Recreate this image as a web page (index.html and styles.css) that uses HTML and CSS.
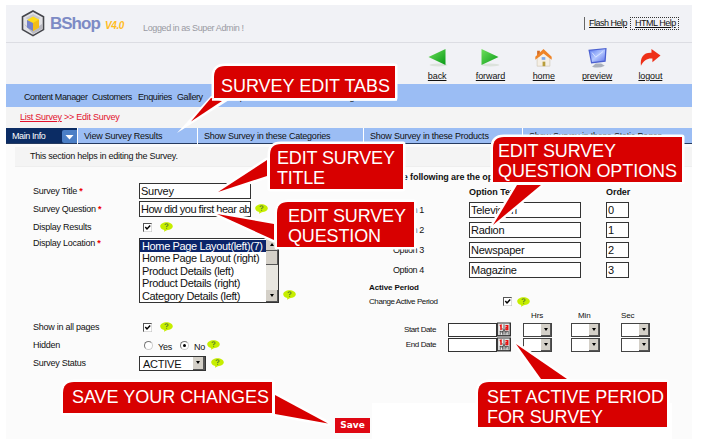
FILE: index.html
```html
<!DOCTYPE html>
<html lang="en">
<head>
<meta charset="utf-8">
<title>BShop - Edit Survey</title>
<link rel="stylesheet" href="styles.css">
</head>
<body>
<svg width="0" height="0" class="defs">
  <defs>
    <linearGradient id="green" x1="0" y1="0" x2="1" y2="1"><stop offset="0" stop-color="#6fe05c"/><stop offset="1" stop-color="#089a17"/></linearGradient>
    <linearGradient id="screen" x1="0" y1="0" x2="1" y2="1"><stop offset="0" stop-color="#5f7df0"/><stop offset=".5" stop-color="#b4c8ff"/><stop offset="1" stop-color="#6478ea"/></linearGradient>
    <symbol id="help" viewBox="0 0 13 10"><path d="M6.5 0.3C10 .3 12.8 2 12.8 4.3S10 8.2 6.8 8.2L4 9.8 4.3 8C2 7.500.2 6.200.2 4.300.2 2 3 .3 6.500.3Z" fill="#c6ee00"/><path d="M5 3Q5.200 1.700 6.600 1.700T8.100 3Q8.100 3.800 6.600 4.600V5.200M6.600 6.200V7.100" fill="none" stroke="#62872a" stroke-width="1.100"/></symbol>
    <symbol id="check" viewBox="0 0 9 9"><path d="M0 0H9V9H0Z" fill="#fff"/><path d="M0 9V0H9" fill="none" stroke="#555" stroke-width="2"/><path d="M9 0V9H0" fill="none" stroke="#bbb"/><path d="M2.300 4 4 5.900 7.200 2.600" fill="none" stroke="#000" stroke-width="1.500"/></symbol>
    <symbol id="cal" viewBox="0 0 15 15"><path d="M0 0H15V15H0Z" fill="#333"/><path d="M1 1H13.500V13.500H1Z" fill="#d5d5d5"/><path d="M2 2H13V13H2Z" fill="#eee"/><path d="M7.500 2V13M3 9.500H6M9 9.500H12M3.500 9V13M6 9V13M9.500 9V13M12 9V13M5 6 10 11M10 6 5 11" fill="none" stroke="#444" stroke-width=".9"/><path d="M3 3.500 4.300 3V8M9 3.500H11.500V7.500H9M9 5.500H11" fill="none" stroke="#e81010" stroke-width="1.600"/></symbol>
  </defs>
</svg>
<div class="app">
  <header class="header">
    <svg class="logo" viewBox="0 0 24 27"><path d="M12 1 22.500 6.800V19.600L12 25.600 1.500 19.600V6.800Z" fill="#e2e2e6" stroke="#45464c" stroke-width="1.600"/><path d="M12 4 19.500 8 12 12 4.500 8Z" fill="#c9c9cf"/><path d="M3 14 12 24 21 19V14L12 20Z" fill="#b9b9c2"/><path d="M6 10 12 6.500 18 9.500V17.500L12 21Z" fill="#ffdc18"/><path d="M6 10 12 13V21L6 17.500Z" fill="#7482c9"/><path d="M12 13 18 9.500V17.500L12 21Z" fill="#f2bd17"/></svg>
    <span class="brand">BShop</span><span class="version">V4.0</span>
    <span class="login">Logged in as Super Admin !</span>
    <nav class="helps"><a class="flash">Flash Help</a><a class="html">HTML Help</a></nav>
  </header>
  <div class="toolbar">
    <a class="tool"><svg viewBox="0 0 20 20"><ellipse cx="11" cy="17" rx="9" ry="1.500" fill="#dce2dc"/><path d="M1 9 18 1V17Z" fill="url(#green)"/></svg><span>back</span></a>
    <a class="tool"><svg viewBox="0 0 20 20"><ellipse cx="10" cy="17" rx="9" ry="1.500" fill="#dce2dc"/><path d="M18 9 1 1V17Z" fill="url(#green)"/></svg><span>forward</span></a>
    <a class="tool"><svg viewBox="0 0 20 22"><path d="M3 11 10 5 17 11V20H3Z" fill="#f5efe5" stroke="#c9bda9" stroke-width=".6"/><path d="M3 3H6V9H3Z" fill="#d46a22"/><path d="M1 13V9.500L10 1 19 9.500V13L10 6Z" fill="#ef8427"/><path d="M8 10H12V13H8Z" fill="#7da9ec"/><path d="M9 15H12V20H9Z" fill="#b89d3b"/></svg><span>home</span></a>
    <a class="tool"><svg viewBox="0 0 22 22"><path d="M1 2 21 0 20 15 4 17Z" fill="#4b60d0"/><path d="M2.500 3 19.500 1.500 18.700 13.800 5 15.500Z" fill="url(#screen)"/><path d="M5 5 9 10 17 4" stroke="#dce6ff" fill="none"/><path d="M9 17H15L19 19.500Q12 23 5 20.500Z" fill="#aab0bc"/></svg><span>preview</span></a>
    <a class="tool"><svg viewBox="0 0 22 20"><path d="M1 18C0 9 4 4 12 4.500V0.500L21.500 7.500 13 14.500V10.500C8 10 4 12 1 18Z" fill="#ee3018"/></svg><span>logout</span></a>
  </div>
  <nav class="menu"><a class="m1">Content Manager</a><a class="m2">Customers</a><a class="m3">Enquiries</a><a class="m4">Gallery</a><a class="m5">Reports</a><a class="m6">Settings</a></nav>
  <div class="crumbs"><u>List Survey</u> &gt;&gt; Edit Survey</div>
  <div class="tabs">
    <div class="tab active"><span>Main Info</span><svg viewBox="0 0 15 13"><path d="M0 2Q0 0 2 0H15V13H2Q0 13 0 11Z" fill="#4b7fc6"/><path d="M3.500 5H11.500L7.500 9.500Z" fill="#fff"/></svg></div>
    <div class="tab"><span>View Survey Results</span></div>
    <div class="tab"><span>Show Survey in these Categories</span></div>
    <div class="tab"><span>Show Survey in these Products</span></div>
    <div class="tab"><span>Show Survey in these Static Pages</span></div>
  </div>
  <div class="intro"><span>This section helps in editing the Survey.</span></div>
  <main class="content">
    <section class="left">
      <div class="row"><label>Survey Title <b>*</b></label><div class="field wide"><span>Survey</span></div></div>
      <div class="row"><label>Survey Question <b>*</b></label><div class="field wide"><span class="question">How did you first hear ab</span></div><svg class="help up"><use href="#help"/></svg></div>
      <div class="row"><label>Display Results</label><svg class="check"><use href="#check"/></svg><svg class="help"><use href="#help"/></svg></div>
      <div class="row list-row"><label>Display Location <b>*</b></label>
        <div class="list"><div class="options"><p class="sel">Home Page Layout(left)(7)</p><p>Home Page Layout (right)</p><p>Product Details (left)</p><p>Product Details (right)</p><p>Category Details (left)</p></div><div class="scroll"><i class="arrow upward"></i><i class="thumb"></i><i class="arrow down"></i></div></div>
        <svg class="help"><use href="#help"/></svg></div>
      <div class="row"><label>Show in all pages</label><svg class="check"><use href="#check"/></svg><svg class="help"><use href="#help"/></svg></div>
      <div class="row"><label>Hidden</label><i class="radio"></i><span class="yes">Yes</span><i class="radio on"></i><span class="no">No</span><svg class="help near"><use href="#help"/></svg></div>
      <div class="row"><label>Survey Status</label><div class="status"><span>ACTIVE</span><i class="drop"></i></div><svg class="help st"><use href="#help"/></svg></div>
    </section>
    <section class="right">
      <h3 class="lead">The following are the options of the survey</h3>
      <div class="heads"><b>Option Text</b><b>Order</b></div>
      <div class="opt"><label>Option 1</label><div class="field wide"><span>Television</span></div><div class="field ord">0</div></div>
      <div class="opt"><label>Option 2</label><div class="field wide"><span>Radion</span></div><div class="field ord">1</div></div>
      <div class="opt"><label>Option 3</label><div class="field wide"><span>Newspaper</span></div><div class="field ord">2</div></div>
      <div class="opt"><label>Option 4</label><div class="field wide"><span>Magazine</span></div><div class="field ord">3</div></div>
      <h3 class="period">Active Period</h3>
      <div class="change"><span>Change Active Period</span><svg class="check"><use href="#check"/></svg><svg class="help"><use href="#help"/></svg></div>
      <div class="units"><span>Hrs</span><span>Min</span><span>Sec</span></div>
      <div class="date"><label>Start Date</label><div class="field day"></div><svg class="cal"><use href="#cal"/></svg><div class="pick"><i class="drop"></i></div><div class="pick"><i class="drop"></i></div><div class="pick"><i class="drop"></i></div></div>
      <div class="date"><label>End Date</label><div class="field day"></div><svg class="cal"><use href="#cal"/></svg><div class="pick"><i class="drop"></i></div><div class="pick"><i class="drop"></i></div><div class="pick"><i class="drop"></i></div></div>
    </section>
  </main>
  <footer class="footer"><button class="save">Save</button><div class="blank"></div></footer>
</div>
<svg class="callouts" viewBox="0 0 702 439">
  <g class="outlined"><path d="M211 96 177 133 229 100Z" class="white"/><path d="M225 66H395V98H214V77Q214 66 225 66Z"/></g>
  <path d="M211 98 191 121.500 222 101Z"/>
  <path d="M212 99.500H397" class="line"/>
  <text x="221" y="92" textLength="169">SURVEY EDIT TABS</text>
  <g class="outlined"><path d="M267 160 218 192 267 176Z"/><path d="M281 144H403V189H270V155Q270 144 281 144Z"/></g>
  <path d="M268.500 158V178" class="line"/>
  <text x="277" y="163.500" textLength="118">EDIT SURVEY</text><text x="277" y="183.500" textLength="48">TITLE</text>
  <g class="outlined"><path d="M274 224 217 214 274 240Z"/><path d="M288 202H414V247H277V213Q277 202 288 202Z"/></g>
  <path d="M275.500 222V242" class="line"/>
  <text x="288" y="221.500" textLength="118">EDIT SURVEY</text><text x="288" y="241.500" textLength="93">QUESTION</text>
  <g class="outlined"><path d="M517 185 493 225 541 185Z"/><path d="M504 137H682V182H493V148Q493 137 504 137Z"/></g>
  <path d="M515 183.500H543" class="line"/>
  <text x="498" y="156.500" textLength="118">EDIT SURVEY</text><text x="498" y="176.500" textLength="179">QUESTION OPTIONS</text>
  <g class="outlined"><path d="M275 395 328 423.500 275 414Z"/><path d="M74 382H272V413H63V393Q63 382 74 382Z"/></g>
  <path d="M273.500 382V416" class="line"/>
  <text x="72" y="402.500" textLength="197">SAVE YOUR CHANGES</text>
  <g class="outlined"><path d="M541 379 516 344 567 379Z"/><path d="M489 382H667V427H478V393Q478 382 489 382Z"/></g>
  <path d="M538 380.500H570" class="line"/>
  <text x="487" y="403" textLength="177">SET ACTIVE PERIOD</text><text x="487" y="423" textLength="116">FOR SURVEY</text>
</svg>
</body>
</html>
```

FILE: styles.css
```css
* { box-sizing: border-box; }
body { margin: 0; width: 702px; height: 439px; overflow: hidden; background: #fff; font: 9px/12px "Liberation Sans", Arial, sans-serif; letter-spacing: -.25px; color: #111; white-space: nowrap; position: relative; }
svg { display: block; flex: none; }
.defs { position: absolute; }
.app { width: 686px; height: 434px; margin: 5px 0 0 6px; background: #fbfbfb; display: flex; flex-direction: column; }
.header { height: 38px; background: #f1f2f6; border-bottom: 1px solid #dcdde3; display: flex; align-items: center; flex: none; }
.logo { width: 24px; height: 27px; margin-left: 15px; }
.brand { font: bold 17px/20px "Liberation Sans", Arial, sans-serif; letter-spacing: -1px; color: #7d8bc5; margin-left: 5px; width: 55px; }
.version { font: italic bold 10px/12px "Liberation Sans", Arial, sans-serif; letter-spacing: -.4px; color: #ffbc1e; width: 38px; padding-top: 4px; }
.login { color: #999aa3; padding-top: 8px; letter-spacing: -.38px; }
.helps { margin-left: auto; margin-right: 13px; display: flex; text-decoration: underline; letter-spacing: -.5px; }
.helps a { height: 13px; line-height: 13px; }
.flash { border-left: 1px solid #666; padding-left: 4px; width: 46px; }
.helps .html { border: 1px dotted #333; padding-left: 4px; width: 49px; line-height: 11px; }
.toolbar { height: 41px; flex: none; background: #f1f2f6; display: flex; justify-content: flex-end; padding: 5px 15px 0 0; letter-spacing: -.1px; }
.tool { width: 53.3px; display: flex; flex-direction: column; align-items: center; text-decoration: underline; }
.tool svg { width: 21px; height: 20px; margin-bottom: 2px; }
.menu { height: 23px; flex: none; background: #9bbdf4; line-height: 26px; display: flex; padding-left: 18px; letter-spacing: -.4px; }
.m1 { width: 68px; } .m2 { width: 46px; } .m3 { width: 39px; } .m4 { width: 52px; } .m5 { width: 100px; }
.crumbs { height: 21px; flex: none; background: #f4f4f4; color: #e3122d; padding-left: 14px; line-height: 21px; }
.tabs { height: 16px; flex: none; display: grid; grid-template-columns: 71px 119px 165px 158px 169px; gap: 1px; background: #fff; letter-spacing: -.22px; }
.tab { background: #9bbdf4; border-bottom: 1px solid #253a5f; padding-left: 6px; line-height: 17px; overflow: hidden; display: flex; }
.tab.active { background: #0b2c64; color: #fff; justify-content: space-between; letter-spacing: -.4px; }
.tab.active svg { width: 15px; height: 13px; margin-top: 2px; }
.intro { margin: 3px 0 0 9px; padding-left: 15px; height: 20px; flex: none; background: #f4f4f4; border-bottom: 1px solid #eee; line-height: 19px; }
.content { display: grid; grid-template-columns: 357px 1fr; height: 236px; flex: none; }
.left { padding: 15px 0 0 27px; }
.row { height: 18px; display: flex; align-items: center; }
.row label { width: 106px; flex: none; }
.row b { color: #e00; }
.field { border: 1px solid #333; height: 16px; background: #fff; font-size: 11px; line-height: 15px; padding-left: 1px; flex: none; }
.question { letter-spacing: -.5px; }
.wide { width: 112px; }
.help { width: 13px; height: 10px; margin-left: 8px; }
.check { width: 9px; height: 9px; margin-left: 4px; }
.help.up { margin-left: 4px; }
.list-row { height: 82px; align-items: flex-start; padding-top: 1px; }
.list { display: flex; width: 140px; height: 65px; border: 1px solid #333; background: #fff; margin-top: 1px; }
.options { flex: 1; font-size: 11px; line-height: 12.400px; padding-top: 1px; letter-spacing: -.36px; }
.options p { margin: 0; padding-left: 2px; }
.options .sel { background: #0a246a; color: #fff; }
.scroll { width: 12px; background: #e8e6e0; display: flex; flex-direction: column; }
.arrow, .thumb { display: flex; height: 12px; background: #d4d0c8; border-right: 1px solid #555; border-bottom: 1px solid #555; align-items: center; justify-content: center; }
.thumb { height: 14px; }
.arrow::before { content: ""; border: 2.500px solid transparent; border-top: 3px solid #000; border-bottom: 0; }
.upward::before { transform: rotate(180deg); }
.down { margin-top: auto; }
.list-row .help { margin: 53px 0 0 4px; }
.radio { width: 9px; height: 9px; border: 1px solid #777; border-right-color: #ccc; border-bottom-color: #ccc; border-radius: 50%; background: #fff; margin-left: 5px; display: flex; align-items: center; justify-content: center; }
.radio.on::before { content: ""; width: 3px; height: 3px; border-radius: 50%; background: #000; }
.yes, .no { margin-left: 5px; padding-top: 3px; }
.yes { width: 17px; }
.near { margin-left: 2px; }
.status { width: 67px; height: 15px; border: 1px solid #333; background: #fff; font-size: 11px; line-height: 14px; padding-left: 3px; display: flex; justify-content: space-between; }
.drop { width: 12px; background: #d4d0c8; border-right: 2px solid #555; border-bottom: 1px solid #555; display: flex; align-items: center; justify-content: center; }
.drop::before { content: ""; border: 2.500px solid transparent; border-top: 3px solid #000; border-bottom: 0; }
.help.st { margin-left: 5px; }
.right { padding: 3px 0 0 6px; }
h3 { margin: 0; font-size: 9px; letter-spacing: -.1px; }
.lead { height: 15px; line-height: 15px; padding-left: 23px; }
.heads { display: grid; grid-template-columns: 137px 50px; padding-left: 100px; height: 15px; line-height: 15px; letter-spacing: -.05px; }
.opt { height: 20px; display: flex; align-items: center; }
.opt label { width: 100px; padding-left: 24px; letter-spacing: -.4px; }
.ord { width: 23px; margin-left: 25px; }
.period { height: 14px; line-height: 14px; margin-top: 1px; font-size: 8px; }
.change { height: 13px; display: flex; align-items: center; font-size: 8px; letter-spacing: -.42px; }
.change span { width: 130px; }
.change .help { margin-left: 5px; }
.units { height: 14px; display: grid; grid-template-columns: 47px 43px 40px; padding-left: 162px; font-size: 8px; line-height: 16px; letter-spacing: -.1px; }
.date { height: 15px; display: flex; align-items: center; font-size: 8px; letter-spacing: -.4px; }
.date label { width: 67px; text-align: right; margin-right: 12px; }
.day { width: 49px; height: 14px; }
.cal { width: 14px; height: 15px; margin-right: 12px; }
.pick { width: 29px; height: 14px; border: 1px solid #444; background: #fff; display: flex; justify-content: flex-end; margin-right: 19px; }
.pick + .pick { margin-right: 21px; }
.pick .drop { width: 10px; border-right-width: 1px; }
.footer { flex: 1; display: flex; }
.save { margin: 15px 2px 0 329px; padding: 0; width: 35px; height: 15px; background: #df0713; border: 0; color: #fff; font: bold 9px/15px "DejaVu Sans", sans-serif; }
.blank { width: 300px; height: 36px; background: #fff; }
.callouts { position: absolute; left: 0; top: 0; width: 702px; height: 439px; fill: #d80000; letter-spacing: 0; }
.outlined { stroke: #fff; stroke-width: 5px; stroke-linejoin: round; paint-order: stroke; }
.outlined .white { fill: #fff; stroke-width: 0; }
.line { stroke: #fff; stroke-width: 2.500px; }
.callouts text { fill: #fff; font: 18px "Liberation Sans", Arial, sans-serif; }
```
